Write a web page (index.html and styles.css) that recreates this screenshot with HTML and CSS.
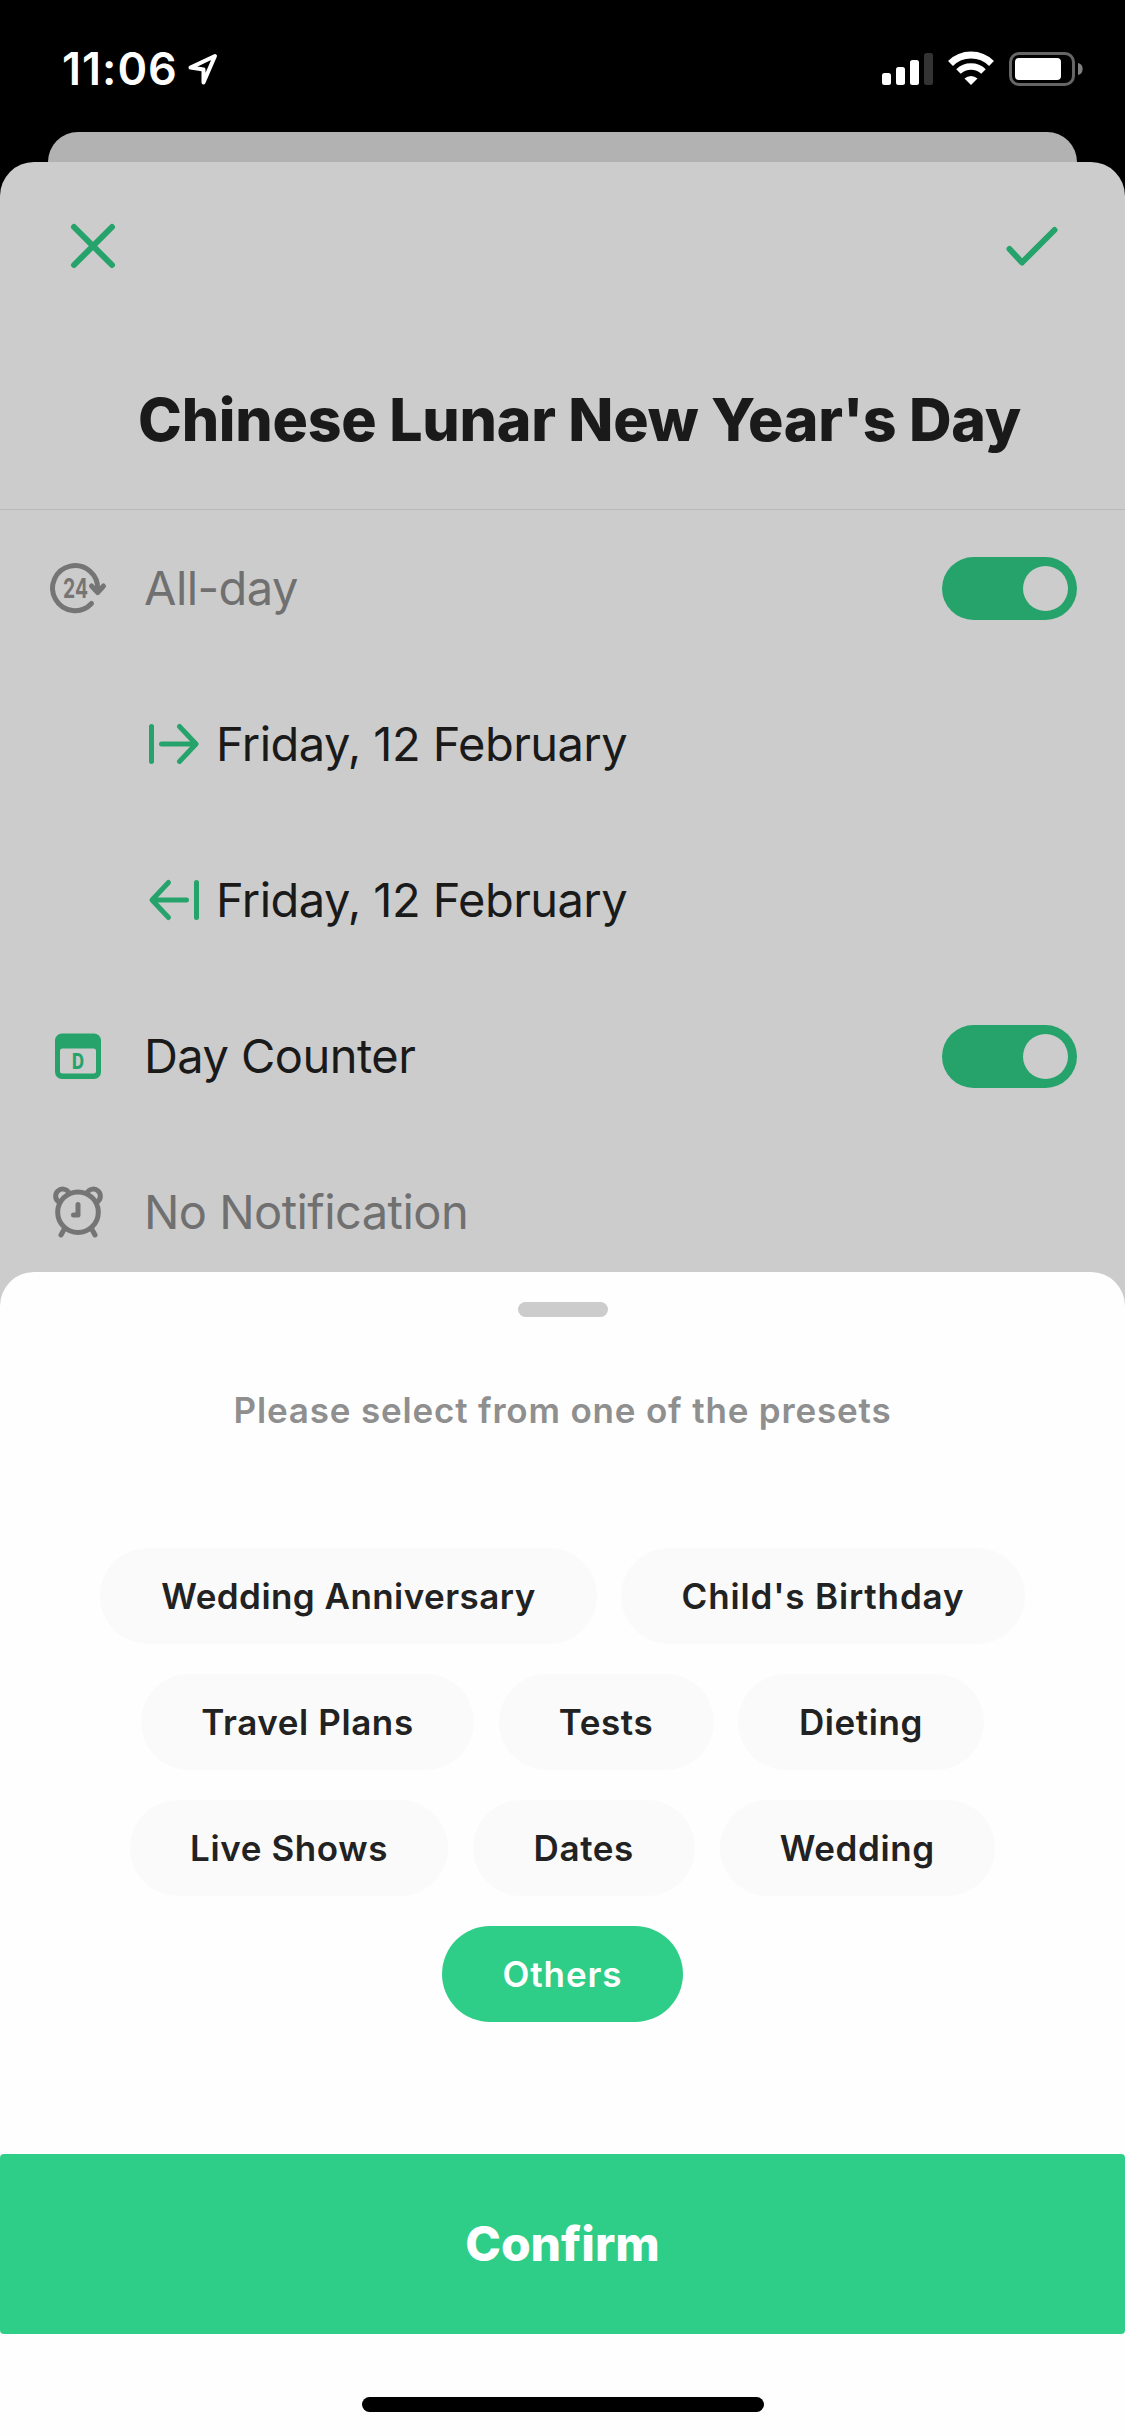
FILE: index.html
```html
<!DOCTYPE html>
<html lang="en">
<head>
<meta charset="utf-8">
<title>Day Counter</title>
<link rel="stylesheet" href="styles.css">
</head>
<body>
<div class="screen">
  <header class="status">
    <div class="status-left">
      <span class="time">11:06</span>
      <svg class="location" width="32" height="34" viewBox="0 0 32 34"><path d="M28 4 3.500 15.600 16.500 17.500v13z" fill="none" stroke="#fff" stroke-width="4" stroke-linejoin="round"/></svg>
    </div>
    <svg class="status-icons" width="202" height="36" viewBox="0 0 202 36">
      <g fill="#fff">
        <rect x="0" y="22" width="9" height="12" rx="2.500"/>
        <rect x="14" y="16" width="9" height="18" rx="2.500"/>
        <rect x="28" y="9" width="9" height="25" rx="2.500"/>
        <rect x="42" y="2" width="9" height="32" rx="2.500" fill="#333"/>
      </g>
      <g fill="none" stroke="#fff">
        <path d="M68.500 12.500a29 29 0 0 1 41 0" stroke-width="7"/>
        <path d="M76.500 20.500a18 18 0 0 1 25 0" stroke-width="6.500"/>
      </g>
      <path d="M82.500 27.500a9.500 9.500 0 0 1 13 0L89 34z" fill="#fff"/>
      <rect x="128.500" y="2.500" width="63" height="31" rx="8.500" fill="none" stroke="#666" stroke-width="3"/>
      <rect x="133" y="7" width="46" height="22" rx="4" fill="#fff"/>
      <path d="M196 12a6.200 6.200 0 0 1 0 12z" fill="#808080"/>
    </svg>
  </header>

  <div class="back-card"></div>

  <main class="editor">
    <div class="toolbar">
      <svg width="46" height="46" viewBox="0 0 46 46"><path d="M4 4 42 42M42 4 4 42" class="line-green"/></svg>
      <svg width="54" height="46" viewBox="0 0 54 46"><path d="M5.500 26 18 39.500 50.500 7" class="line-green"/></svg>
    </div>
    <h1 class="title">Chinese Lunar New Year's Day</h1>
    <div class="row">
      <svg class="row-icon" width="60" height="54" viewBox="0 0 60 54">
        <path d="M43.500 42.500A22.500 22.500 0 1 1 49.500 29" class="line-gray"/>
        <path d="M43.500 25 49.700 31.500 55.500 25" class="line-gray"/>
        <text x="15" y="36.500" class="glyph-24" textLength="25" lengthAdjust="spacingAndGlyphs">24</text>
      </svg>
      <span class="label muted">All-day</span>
      <span class="switch"><span class="knob"></span></span>
    </div>
    <div class="row sub">
      <svg width="52" height="42" viewBox="0 0 52 42"><path d="M3.500 3.500v35M13.500 21H46M31.500 3.500 48 21 31.500 38.500" class="line-arrow"/></svg>
      <span class="label">Friday, 12 February</span>
    </div>
    <div class="row sub">
      <svg width="52" height="42" viewBox="0 0 52 42"><path d="M48.500 3.500v35M38.500 21H6M20.500 3.500 4 21 20.500 38.500" class="line-arrow"/></svg>
      <span class="label">Friday, 12 February</span>
    </div>
    <div class="row">
      <svg class="row-icon" width="60" height="54" viewBox="0 0 60 54">
        <path fill="#26a36b" fill-rule="evenodd" d="M14 4.500h32a7 7 0 0 1 7 7v31.500a7 7 0 0 1-7 7H14a7 7 0 0 1-7-7V11.500a7 7 0 0 1 7-7zM14.500 19.500a2.500 2.500 0 0 0-2.500 2.500v20A2.500 2.500 0 0 0 14.500 44.500h31a2.500 2.500 0 0 0 2.500-2.500v-20A2.500 2.500 0 0 0 45.500 19.500z"/>
        <text x="24" y="39.500" textLength="12" lengthAdjust="spacingAndGlyphs" class="glyph-d">D</text>
      </svg>
      <span class="label">Day Counter</span>
      <span class="switch"><span class="knob"></span></span>
    </div>
    <div class="row">
      <svg class="row-icon" width="60" height="54" viewBox="0 0 60 54">
        <g class="line-gray">
          <circle cx="30" cy="27.200" r="20.300"/>
          <path d="M10.500 16.700A7 7 0 1 1 20.500 7.200M49.500 16.700A7 7 0 1 0 39.500 7.200M16 44.500l-3 5.500M44 44.500l3 5.500M30 19.500v10.500h-4.500"/>
        </g>
      </svg>
      <span class="label muted">No Notification</span>
    </div>
  </main>

  <section class="sheet">
    <div class="grabber"></div>
    <p class="hint">Please select from one of the presets</p>
    <div class="presets">
      <div class="preset-row">
        <button class="chip anniversary">Wedding Anniversary</button>
        <button class="chip birthday">Child's Birthday</button>
      </div>
      <div class="preset-row">
        <button class="chip travel">Travel Plans</button>
        <button class="chip tests">Tests</button>
        <button class="chip dieting">Dieting</button>
      </div>
      <div class="preset-row">
        <button class="chip shows">Live Shows</button>
        <button class="chip dates">Dates</button>
        <button class="chip wedding">Wedding</button>
      </div>
      <div class="preset-row">
        <button class="chip others selected">Others</button>
      </div>
    </div>
    <button class="confirm">Confirm</button>
    <div class="home"></div>
  </section>
</div>
</body>
</html>
```
FILE: styles.css
```css
* { box-sizing: border-box; }
body {
  margin: 0;
  background: #000;
  font-family: Inter, "Liberation Sans", sans-serif;
  color: #1a1a1a;
}
button { border: 0; font: inherit; color: inherit; }
svg { display: block; flex: none; overflow: visible; }

.screen {
  width: 1125px;
  height: 2436px;
  display: flex;
  flex-direction: column;
  overflow: hidden;
}

.status {
  height: 132px;
  flex: none;
  padding: 0 41px 0 62px;
  display: flex;
  justify-content: space-between;
  color: #fff;
}
.status-left { display: flex; gap: 9px; }
.time {
  margin-top: 42px;
  font-size: 45px;
  line-height: 54px;
  font-weight: 600;
  letter-spacing: 1px;
}
.location { margin-top: 52px; }
.status-icons { margin-top: 51px; }

.back-card {
  height: 30px;
  flex: none;
  margin: 0 48px;
  background: #b2b2b2;
  border-radius: 30px 30px 0 0;
}

.editor {
  height: 1160px;
  flex: none;
  background: #ccc;
  border-radius: 34px 34px 0 0;
}
.toolbar {
  height: 168px;
  padding: 0 67px 0 70px;
  display: flex;
  align-items: center;
  justify-content: space-between;
}
.line-green, .line-gray, .line-arrow {
  fill: none;
  stroke: #26a36b;
  stroke-width: 6;
  stroke-linecap: round;
  stroke-linejoin: round;
}
.line-arrow { stroke-width: 5; }
.line-gray { stroke: #757575; stroke-width: 5; }
.glyph-24 { font: 700 27px Inter, sans-serif; fill: #757575; }
.glyph-d { font: 800 21px Inter, sans-serif; fill: #26a36b; }

.title {
  height: 180px;
  margin: 0;
  padding: 52px 0 0 138px;
  border-bottom: 1px solid #b9b9b9;
  font-size: 59px;
  line-height: 76px;
  font-weight: 800;
  letter-spacing: -0.25px;
  white-space: nowrap;
}
.row {
  height: 156px;
  padding: 0 48px;
  display: flex;
  align-items: center;
}
.row-icon { margin-right: 36px; }
.row.sub { padding-left: 148px; gap: 16px; }
.label {
  font-size: 47px;
  line-height: 58px;
  font-weight: 400;
  letter-spacing: -0.55px;
  white-space: nowrap;
}
.muted { color: #707070; }
.switch {
  width: 135px;
  height: 63px;
  margin-left: auto;
  padding: 9px;
  border-radius: 32px;
  background: #26a36b;
  display: flex;
  justify-content: flex-end;
}
.knob { width: 45px; height: 45px; border-radius: 50%; background: #ccc; }

/* Slides over the bottom edge of the editor */
.sheet {
  height: 1164px;
  flex: none;
  margin-top: -50px;
  z-index: 1;
  display: flex;
  flex-direction: column;
  align-items: center;
  background: #fefefe;
  border-radius: 34px 34px 0 0;
}
.grabber {
  width: 90px;
  height: 15px;
  margin-top: 30px;
  border-radius: 8px;
  background: #ccc;
}
.hint {
  margin: 71px 0 115px;
  font-size: 35px;
  line-height: 45px;
  font-weight: 600;
  letter-spacing: 0.82px;
  color: #8f8f8f;
  white-space: nowrap;
}
.presets { display: flex; flex-direction: column; gap: 30px; }
.preset-row { display: flex; justify-content: center; gap: 24.5px; }
.chip {
  height: 96px;
  padding: 0;
  border-radius: 48px;
  background: #fafafa;
  font-size: 35px;
  line-height: 45px;
  font-weight: 600;
  letter-spacing: 0.6px;
  color: #222;
  white-space: nowrap;
}
.anniversary { width: 496.5px; letter-spacing: 0.45px; }
.birthday { width: 403.5px; letter-spacing: 0.85px; }
.travel { width: 333px; }
.tests { width: 215px; }
.dieting { width: 246px; }
.shows { width: 318px; }
.dates { width: 222.5px; }
.wedding { width: 275.5px; }
.others { width: 241px; }
.chip.selected { background: #2fce88; color: #fff; letter-spacing: 0.9px; }
.confirm {
  width: 100%;
  height: 180px;
  margin-top: 132px;
  padding: 0 0 2px;
  border-radius: 4px;
  background: #2fce88;
  color: #fff;
  font-size: 48px;
  font-weight: 800;
}
.home {
  width: 402px;
  height: 15px;
  margin-top: 63px;
  border-radius: 8px;
  background: #000;
}
```
